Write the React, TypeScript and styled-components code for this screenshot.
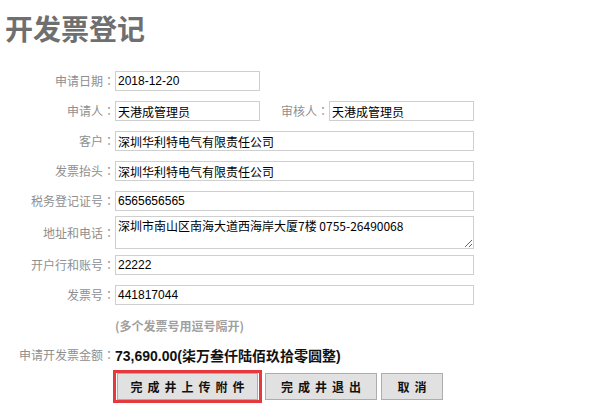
import React from "react";
import styled, { createGlobalStyle } from "styled-components";

const GlobalStyle = createGlobalStyle`
  body {
    margin: 0;
    background: #fff;
    font-family: "Noto Sans CJK SC", sans-serif;
  }
`;

const Page = styled.div`
  width: 593px;
  height: 418px;
  overflow: hidden;
`;

const Title = styled.h1`
  margin: 14px 0 0 5px;
  height: 28px;
  font-size: 28px;
  line-height: 28px;
  font-weight: bold;
  color: #6f6f6f;
  font-family: "Noto Sans CJK SC", sans-serif;
`;

const Form = styled.div`
  margin-top: 29px;
  display: flex;
  flex-direction: column;
`;

const Row = styled.div<{ $mb?: number; $h?: number }>`
  display: flex;
  align-items: center;
  height: ${(p) => p.$h ?? 20}px;
  margin-bottom: ${(p) => p.$mb ?? 10}px;
`;

const Label = styled.label<{ $w?: number }>`
  width: ${(p) => p.$w ?? 115}px;
  flex: none;
  text-align: right;
  font-size: 12px;
  line-height: 20px;
  color: #8f8f8f;
  white-space: nowrap;

  &::after {
    content: "：";
    font-family: "Noto Sans CJK TC", sans-serif;
  }
`;

const Spacer = styled.span`
  width: 115px;
  flex: none;
`;

const Input = styled.input<{ $w?: number }>`
  box-sizing: border-box;
  width: ${(p) => p.$w ?? 145}px;
  height: 20px;
  margin: 0;
  padding: 0 2px;
  border: 1px solid #cfcfcf;
  font-family: "Liberation Sans", "Noto Sans CJK SC", sans-serif;
  font-size: 12px;
  color: #000;
  outline: none;
`;

const TextArea = styled.textarea`
  box-sizing: border-box;
  width: 359px;
  height: 33px;
  margin: 0;
  padding: 2px;
  border: 1px solid #cfcfcf;
  font-family: "Noto Sans CJK SC", sans-serif;
  font-size: 12px;
  line-height: 14px;
  color: #000;
  outline: none;
`;

const Hint = styled.span`
  font-size: 12px;
  font-weight: bold;
  color: #a0a0a0;
`;

const Amount = styled.span`
  font-family: "Liberation Sans", "Noto Sans CJK SC", sans-serif;
  font-size: 14px;
  font-weight: bold;
  color: #111;
`;

const ButtonBar = styled.div`
  display: flex;
  align-items: center;
  padding-left: 113px;
  margin-top: -5px;
`;

const Highlight = styled.div`
  display: flex;
  border: 3px solid #e53a3d;
  padding: 0 1px;
`;

const Button = styled.button<{ $w: number; $ml?: number }>`
  box-sizing: border-box;
  width: ${(p) => p.$w}px;
  height: 27px;
  margin: 0 0 0 ${(p) => p.$ml ?? 0}px;
  padding: 0 0 0 5px;
  background: #e1e1e1;
  border: 1px solid #adadad;
  font-family: "Noto Sans CJK SC", sans-serif;
  font-size: 12px;
  font-weight: bold;
  letter-spacing: 5px;
  color: #111;
  cursor: pointer;
`;

export default function App() {
  return (
    <Page>
      <GlobalStyle />
      <Title>开发票登记</Title>
      <Form>
        <Row>
          <Label>申请日期</Label>
          <Input defaultValue="2018-12-20" />
        </Row>
        <Row>
          <Label>申请人</Label>
          <Input defaultValue="天港成管理员" />
          <Label $w={69}>审核人</Label>
          <Input defaultValue="天港成管理员" />
        </Row>
        <Row>
          <Label>客户</Label>
          <Input $w={359} defaultValue="深圳华利特电气有限责任公司" />
        </Row>
        <Row>
          <Label>发票抬头</Label>
          <Input $w={359} defaultValue="深圳华利特电气有限责任公司" />
        </Row>
        <Row $mb={5}>
          <Label>税务登记证号</Label>
          <Input $w={359} defaultValue="6565656565" />
        </Row>
        <Row $h={33} $mb={6}>
          <Label>地址和电话</Label>
          <TextArea defaultValue="深圳市南山区南海大道西海岸大厦7楼 0755-26490068" />
        </Row>
        <Row>
          <Label>开户行和账号</Label>
          <Input $w={359} defaultValue="22222" />
        </Row>
        <Row>
          <Label>发票号</Label>
          <Input $w={359} defaultValue="441817044" />
        </Row>
        <Row>
          <Spacer />
          <Hint>(多个发票号用逗号隔开)</Hint>
        </Row>
        <Row>
          <Label>申请开发票金额</Label>
          <Amount>73,690.00(柒万叁仟陆佰玖拾零圆整)</Amount>
        </Row>
        <ButtonBar>
          <Highlight>
            <Button $w={141}>完成井上传附件</Button>
          </Highlight>
          <Button $w={112} $ml={3}>完成井退出</Button>
          <Button $w={62} $ml={4}>取消</Button>
        </ButtonBar>
      </Form>
    </Page>
  );
}
